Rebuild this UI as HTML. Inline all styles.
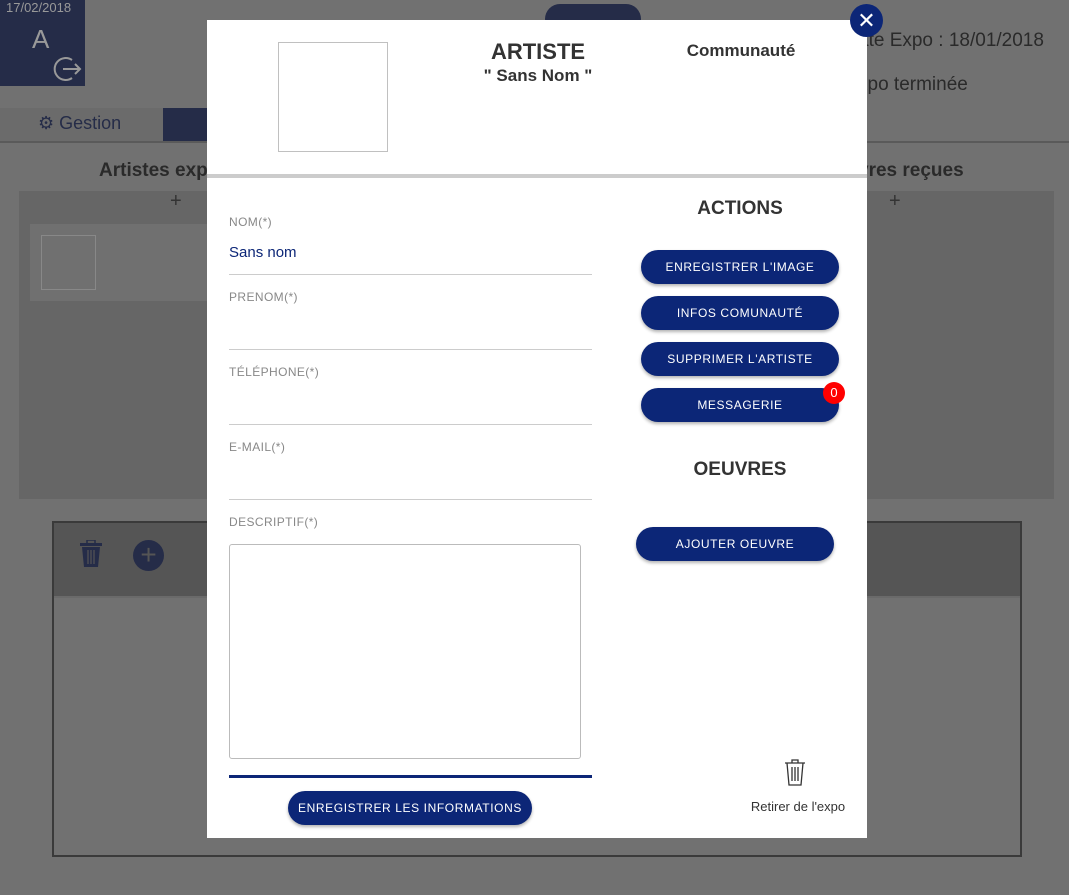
<!DOCTYPE html>
<html><head><meta charset="utf-8"><style>
*{box-sizing:border-box;margin:0;padding:0}
body{width:1069px;height:895px;position:relative;overflow:hidden;background:#717171;font-family:"Liberation Sans",sans-serif}
.abs{position:absolute;white-space:nowrap}
.btn{position:absolute;background:#0c2677;color:#fff;border-radius:17px;height:34px;font-size:12px;letter-spacing:.6px;display:flex;align-items:center;justify-content:center;box-shadow:0 2px 3px rgba(0,0,0,.3)}
.lbl{position:absolute;left:229px;font-size:12px;color:#888;letter-spacing:.4px}
.line{position:absolute;left:229px;width:363px;height:1px;background:#ccc}
</style></head><body>
<div class="abs" style="left:0;top:0;width:85px;height:86px;background:#252c48"></div>
<div class="abs" style="left:6px;top:0;font-size:13px;color:#999">17/02/2018</div>
<div class="abs" style="left:32px;top:24px;font-size:26px;color:#999">A</div>
<svg class="abs" style="left:52px;top:54px" width="30" height="30" viewBox="0 0 30 30"><path d="M20 6A11 11 0 1 0 20 24" fill="none" stroke="#999" stroke-width="2"/><path d="M11 15H28M23 10L28 15L23 20" fill="none" stroke="#999" stroke-width="2"/></svg>
<div class="abs" style="left:545px;top:4px;width:96px;height:30px;background:#252c48;border-radius:15px"></div>
<div class="abs" style="left:0;top:108px;width:163px;height:33px;background:#6b6b6b"></div>
<div class="abs" style="left:163px;top:108px;width:60px;height:33px;background:#252c48"></div>
<div class="abs" style="left:38px;top:113px;font-size:18px;color:#252c48">⚙ Gestion</div>
<div class="abs" style="left:0;top:141px;width:1069px;height:2px;background:#5a5a5a"></div>
<div class="abs" style="left:858px;top:30px;font-size:19px;color:#2a2a2a">ate Expo : 18/01/2018</div>
<div class="abs" style="left:858px;top:74px;font-size:19px;color:#2a2a2a">xpo terminée</div>
<div class="abs" style="left:99px;top:160px;font-size:19px;font-weight:bold;color:#2a2a2a">Artistes expo</div>
<div class="abs" style="left:858px;top:160px;font-size:19px;font-weight:bold;color:#2a2a2a">vres reçues</div>
<div class="abs" style="left:19px;top:191px;width:1035px;height:308px;background:#666"></div>
<div class="abs" style="left:170px;top:190px;font-size:20px;color:#333">+</div>
<div class="abs" style="left:889px;top:190px;font-size:20px;color:#333">+</div>
<div class="abs" style="left:30px;top:224px;width:180px;height:77px;background:#707070"></div>
<div class="abs" style="left:41px;top:235px;width:55px;height:55px;border:1px solid #888"></div>
<div class="abs" style="left:52px;top:521px;width:970px;height:336px;border:2px solid #3a3a3a;background:#717171"></div>
<div class="abs" style="left:54px;top:523px;width:966px;height:75px;background:#555;border-bottom:2px solid #6a6a6a"></div>
<svg class="abs" style="left:78px;top:540px" width="26" height="28" viewBox="0 0 26 28"><rect x="2" y="3" width="22" height="3" fill="#252c48"/><rect x="9" y="0" width="8" height="4" fill="none" stroke="#252c48" stroke-width="1.5"/><path d="M4 7H22L20 27H6Z" fill="#252c48"/><path d="M10 10V24M13 10V24M16 10V24" stroke="#555" stroke-width="1.2"/></svg>
<div class="abs" style="left:133px;top:540px;width:31px;height:31px;border-radius:50%;background:#252c48"></div>
<div class="abs" style="left:137px;top:539px;width:23px;text-align:center;font-size:28px;line-height:32px;color:#555">+</div>

<div class="abs" style="left:207px;top:20px;width:660px;height:818px;background:#fff"></div>
<div class="abs" style="left:207px;top:174px;width:660px;height:4px;background:#ccc"></div>
<div class="abs" style="left:278px;top:42px;width:110px;height:110px;border:1px solid #c0c0c0"></div>
<div class="abs" style="left:438px;top:39px;width:200px;text-align:center;font-size:22px;font-weight:bold;color:#333">ARTISTE</div>
<div class="abs" style="left:438px;top:66px;width:200px;text-align:center;font-size:17px;font-weight:bold;color:#333">" Sans Nom "</div>
<div class="abs" style="left:641px;top:41px;width:200px;text-align:center;font-size:17px;font-weight:bold;color:#333">Communauté</div>
<div class="abs" style="left:850px;top:4px;width:33px;height:33px;border-radius:50%;background:#0c2677;color:#fff;font-size:22px;text-align:center;line-height:33px">✕</div>

<div class="lbl" style="top:215px">NOM(*)</div>
<div class="abs" style="left:229px;top:244px;font-size:15px;color:#0c2677">Sans nom</div>
<div class="line" style="top:274px"></div>
<div class="lbl" style="top:290px">PRENOM(*)</div>
<div class="line" style="top:349px"></div>
<div class="lbl" style="top:365px">TÉLÉPHONE(*)</div>
<div class="line" style="top:424px"></div>
<div class="lbl" style="top:440px">E-MAIL(*)</div>
<div class="line" style="top:499px"></div>
<div class="lbl" style="top:515px">DESCRIPTIF(*)</div>
<div class="abs" style="left:229px;top:544px;width:352px;height:215px;border:1px solid #bbb;border-radius:3px"></div>
<div class="abs" style="left:229px;top:775px;width:363px;height:3px;background:#0c2677"></div>
<div class="btn" style="left:288px;top:791px;width:244px">ENREGISTRER LES INFORMATIONS</div>

<div class="abs" style="left:640px;top:198px;width:200px;text-align:center;font-size:19px;font-weight:bold;color:#333">ACTIONS</div>
<div class="btn" style="left:641px;top:250px;width:198px">ENREGISTRER L'IMAGE</div>
<div class="btn" style="left:641px;top:296px;width:198px">INFOS COMUNAUTÉ</div>
<div class="btn" style="left:641px;top:342px;width:198px">SUPPRIMER L'ARTISTE</div>
<div class="btn" style="left:641px;top:388px;width:198px">MESSAGERIE</div>
<div class="abs" style="left:823px;top:382px;width:22px;height:22px;border-radius:50%;background:#f00;color:#fff;font-size:13px;text-align:center;line-height:21px">0</div>
<div class="abs" style="left:640px;top:459px;width:200px;text-align:center;font-size:19px;font-weight:bold;color:#333">OEUVRES</div>
<div class="btn" style="left:636px;top:527px;width:198px">AJOUTER OEUVRE</div>
<svg class="abs" style="left:784px;top:758px" width="22" height="28" viewBox="0 0 22 28"><path d="M1 5H21M8 5V2H14V5M3 5L5 27H17L19 5M8 9V23M11 9V23M14 9V23" fill="none" stroke="#333" stroke-width="1.3"/></svg>
<div class="abs" style="left:738px;top:799px;width:120px;text-align:center;font-size:13px;color:#333">Retirer de l'expo</div>
</body></html>
